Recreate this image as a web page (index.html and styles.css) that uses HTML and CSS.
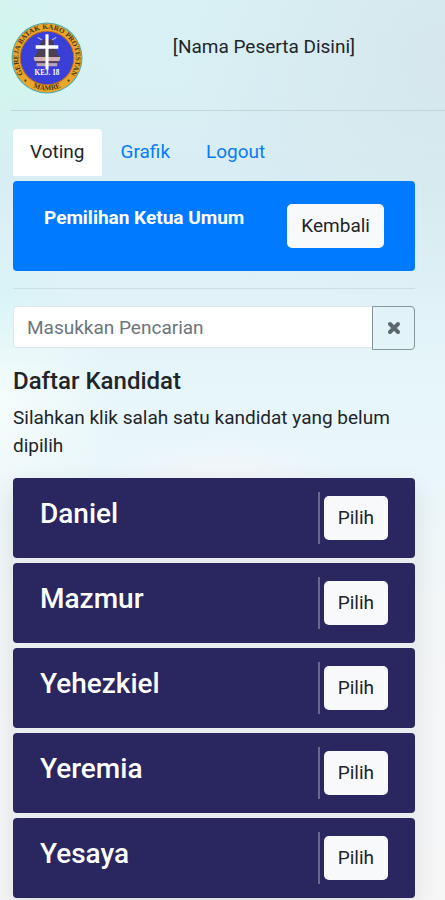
FILE: index.html
```html
<!DOCTYPE html>
<html lang="id">
<head>
    <meta charset="UTF-8">
    <meta name="viewport" content="width=device-width, initial-scale=1.0">
    <title>Pemilihan Ketua Umum</title>
    <link rel="stylesheet" href="styles.css">
</head>
<body>
    <header class="header">
        <svg class="logo" viewBox="0 0 70 70" role="img" aria-label="Logo Mamre">
            <defs>
                <path id="arcTop" d="M15 54.5 A28 28 0 1 1 55 54.5"/>
                <path id="arcBottom" d="M16 60 A31.5 31.5 0 0 0 54 60"/>
            </defs>
            <circle cx="35" cy="35" r="34.5" fill="#4fa9b5"/>
            <circle cx="35" cy="35" r="33.5" fill="#eaa628"/>
            <circle cx="35" cy="35" r="26" fill="#3a3fd8" stroke="#b9682c"/>
            <!-- rumah adat -->
            <path d="M26 15 L31 18 M44 15 L39 18" stroke="#c9c9ec" stroke-width="1"/>
            <path d="M30 17 H40 L43 25 H27 Z" fill="#4b3a55"/>
            <path d="M27 26 L43 26 L47 34 L23 34 Z" fill="#4b414f"/>
            <path d="M22 34 H48 L47 38 H23 Z" fill="#d3b3b8"/>
            <path d="M24 38 H46 V40 H24 Z" fill="#5b4650"/>
            <path d="M25 40 H45 V43 H25 Z" fill="#b9a5b5"/>
            <path d="M33.5 12 H36.5 V22.5 H46 V26 H36.5 V46 H33.5 V26 H24 V22.5 H33.5 Z" fill="#fff"/>
            <text x="35" y="52" class="logo-verse">KEJ. 18</text>
            <text class="logo-ring"><textPath href="#arcTop" startOffset="5">GEREJA</textPath></text>
            <text class="logo-ring"><textPath href="#arcTop" startOffset="35">BATAK</textPath></text>
            <text class="logo-ring"><textPath href="#arcTop" startOffset="61">KARO</textPath></text>
            <text class="logo-ring"><textPath href="#arcTop" startOffset="84">PROTESTAN</textPath></text>
            <text class="logo-ring logo-ring-bottom"><textPath href="#arcBottom" startOffset="50%">MAMRE</textPath></text>
            <circle cx="14" cy="57" r="1" fill="#4a3518"/>
            <circle cx="56" cy="57" r="1" fill="#4a3518"/>
        </svg>
        <span class="peserta">[Nama Peserta Disini]</span>
    </header>

    <main class="container">
        <nav class="tabs">
            <a class="tab active" href="#voting">Voting</a>
            <a class="tab" href="#grafik">Grafik</a>
            <a class="tab" href="#logout">Logout</a>
        </nav>

        <div class="banner">
            <h1 class="banner-title">Pemilihan Ketua Umum</h1>
            <button type="button" class="btn">Kembali</button>
        </div>

        <hr class="garis">

        <form class="search">
            <input type="text" class="search-input" placeholder="Masukkan Pencarian" aria-label="Masukkan Pencarian">
            <button type="reset" class="search-clear" aria-label="Hapus">
                <svg width="14" height="14" viewBox="0 0 14 14">
                    <path d="M3 3 L11 11 M11 3 L3 11" stroke="#5c686d" stroke-width="4" stroke-linecap="round"/>
                </svg>
            </button>
        </form>

        <h2 class="judul">Daftar Kandidat</h2>
        <p class="info">Silahkan klik salah satu kandidat yang belum dipilih</p>

        <ul class="kandidat-list">
            <li class="kandidat">
                <h3 class="nama">Daniel</h3>
                <div class="aksi"><button type="button" class="btn">Pilih</button></div>
            </li>
            <li class="kandidat">
                <h3 class="nama">Mazmur</h3>
                <div class="aksi"><button type="button" class="btn">Pilih</button></div>
            </li>
            <li class="kandidat">
                <h3 class="nama">Yehezkiel</h3>
                <div class="aksi"><button type="button" class="btn">Pilih</button></div>
            </li>
            <li class="kandidat">
                <h3 class="nama">Yeremia</h3>
                <div class="aksi"><button type="button" class="btn">Pilih</button></div>
            </li>
            <li class="kandidat">
                <h3 class="nama">Yesaya</h3>
                <div class="aksi"><button type="button" class="btn">Pilih</button></div>
            </li>
        </ul>
    </main>
</body>
</html>
```

FILE: styles.css
```css
* {
    box-sizing: border-box;
}
body {
    margin: 0;
    font-family: Roboto, "Liberation Sans", sans-serif;
    font-size: 19px;
    line-height: 28px;
    color: #212529;
    background:
        radial-gradient(circle at 0 60px, rgba(208, 247, 236, 0.9), rgba(208, 247, 236, 0) 110px),
        radial-gradient(circle at 0 410px, rgba(247, 253, 252, 0.9), rgba(247, 253, 252, 0) 120px),
        radial-gradient(circle at 0 310px, rgba(212, 244, 246, 0.8), rgba(212, 244, 246, 0) 80px),
        radial-gradient(ellipse 130px 50px at 50% 485px, rgba(246, 246, 252, 0.9), rgba(246, 246, 252, 0)),
        radial-gradient(circle at 100% 60px, rgba(213, 230, 236, 0.9), rgba(213, 230, 236, 0) 260px),
        linear-gradient(#d9f1f4, #d8eef4 180px, #e0f2f8 290px, #e7f6fa 400px, #eaf6fa 480px, #f3f6f7 620px, #f6f6f7);
}
h1, h2, h3, p, ul {
    margin: 0;
    padding: 0;
}
.header {
    display: flex;
    align-items: flex-start;
    margin-left: 11px;
    padding: 22px 0 16px;
    border-bottom: 1px solid #c2d6da;
}
.logo {
    flex: none;
    width: 72px;
    height: 72px;
}
.logo-ring {
    font-family: "Liberation Serif", serif;
    font-size: 7px;
    font-weight: bold;
    fill: #4a3518;
}
.logo-ring-bottom {
    text-anchor: middle;
}
.logo-verse {
    font-family: "Liberation Serif", serif;
    font-size: 7px;
    font-weight: bold;
    fill: #fff;
    text-anchor: middle;
}
.peserta {
    flex: 1;
    padding-top: 11px;
    text-align: center;
}
.container {
    padding: 18px 30px 3px 13px;
}
.tabs {
    display: flex;
    gap: 2px;
    margin-bottom: 5px;
}
.tab {
    padding: 9px 17px 10px;
    border-radius: 4px 4px 0 0;
    color: #087bf5;
    text-decoration: none;
}
.tab.active {
    background: #fff;
    color: #212529;
}
.banner {
    display: flex;
    justify-content: space-between;
    align-items: flex-start;
    min-height: 89px;
    padding: 23px 31px;
    border-radius: 4px;
    background: #007bff;
}
.banner-title {
    font-size: 19px;
    line-height: 28px;
    font-weight: 700;
    color: #fff;
}
.btn {
    height: 44px;
    padding: 0 14px;
    border: none;
    border-radius: 5px;
    background: #f8f9fa;
    color: #212529;
    font: inherit;
    cursor: pointer;
}
.garis {
    margin: 17px 0;
    border: none;
    border-top: 1px solid #ccdfe6;
}
.search {
    display: flex;
    align-items: flex-start;
    margin-bottom: 17px;
}
.search-input {
    flex: 1;
    min-width: 0;
    height: 42px;
    padding: 0 13px;
    border: 1px solid #dfe8ec;
    border-right: none;
    border-radius: 4px 0 0 4px;
    background: #fff;
    color: #495057;
    font: inherit;
}
.search-input::placeholder {
    color: #6c757d;
    opacity: 1;
}
.search-clear {
    display: flex;
    align-items: center;
    justify-content: center;
    width: 43px;
    height: 44px;
    padding: 0;
    border: 1px solid #84979a;
    border-radius: 0 4px 4px 0;
    background: none;
    cursor: pointer;
}
.judul {
    margin-bottom: 9px;
    font-size: 24px;
    line-height: 28px;
    font-weight: 500;
}
.info {
    margin-bottom: 18px;
}
.kandidat-list {
    display: flex;
    flex-direction: column;
    gap: 5px;
    list-style: none;
    border-radius: 4px;
    box-shadow: 0 8px 24px rgba(0, 0, 0, 0.1);
    background: #e9edf0;
}
.kandidat {
    display: flex;
    justify-content: space-between;
    align-items: flex-start;
    height: 80px;
    padding: 14px 27px;
    border-radius: 4px;
    background: #2a265f;
}
.nama {
    padding-top: 5px;
    font-size: 28px;
    line-height: 34px;
    font-weight: 500;
    color: #fff;
}
.aksi {
    padding: 4px 0 4px 4px;
    border-left: 2px solid #6b6890;
    line-height: 0;
}
.aksi .btn {
    line-height: 28px;
}
```
